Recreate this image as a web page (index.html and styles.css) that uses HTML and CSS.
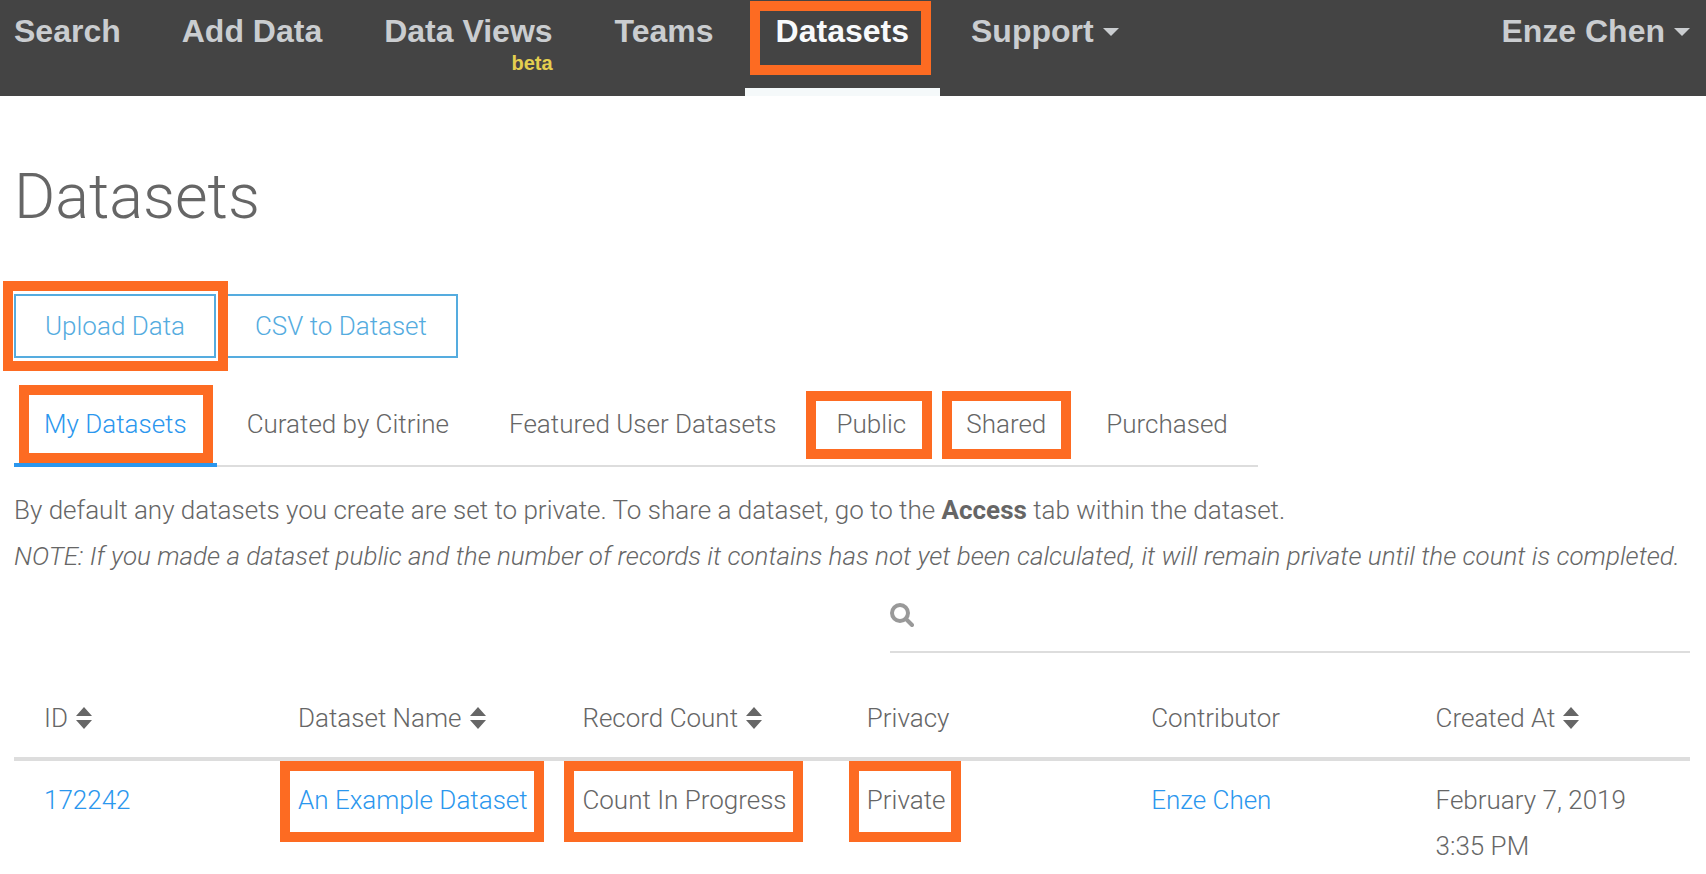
FILE: index.html
```html
<!DOCTYPE html>
<html lang="en">
<head>
<meta charset="utf-8">
<title>Datasets</title>
<link rel="stylesheet" href="styles.css">
</head>
<body>
<header class="topbar">
  <nav class="nav" aria-label="Main">
    <a class="nav-item" href="#">Search</a>
    <a class="nav-item" href="#">Add Data</a>
    <a class="nav-item" href="#">Data Views<span class="beta">beta</span></a>
    <a class="nav-item" href="#">Teams</a>
    <a class="nav-item active marked mark-nav" href="#">Datasets</a>
    <button class="nav-item" type="button">Support<span class="caret"></span></button>
    <button class="nav-item user" type="button">Enze Chen<span class="caret"></span></button>
  </nav>
</header>
<main class="page">
  <h1 class="title">Datasets</h1>
  <div class="actions">
    <button class="btn marked mark-btn" type="button">Upload Data</button>
    <button class="btn" type="button">CSV to Dataset</button>
  </div>
  <nav class="tabs" aria-label="Dataset groups">
    <a class="tab current marked mark-current" href="#">My Datasets</a>
    <a class="tab" href="#">Curated by Citrine</a>
    <a class="tab" href="#">Featured User Datasets</a>
    <a class="tab marked mark-public" href="#">Public</a>
    <a class="tab marked mark-shared" href="#">Shared</a>
    <a class="tab" href="#">Purchased</a>
  </nav>
  <p class="hint">By default any datasets you create are set to private. To share a dataset, go to the <strong>Access</strong> tab within the dataset.</p>
  <p class="note">NOTE: If you made a dataset public and the number of records it contains has not yet been calculated, it will remain private until the count is completed.</p>
  <label class="search">
    <svg class="search-icon" viewBox="0 0 24 26" aria-hidden="true"><circle cx="10" cy="11" r="8" fill="none" stroke="#999" stroke-width="4"/><path d="M16 17l6 6" stroke="#999" stroke-width="4" stroke-linecap="round"/></svg>
    <input class="search-input" type="search" aria-label="Search datasets">
  </label>
  <table class="grid">
    <colgroup><col class="c-id"><col><col><col><col><col></colgroup>
    <thead>
      <tr>
        <th><button class="sort" type="button">ID<svg class="sort-icon" viewBox="0 0 16 22" aria-hidden="true"><path d="M8 0l8 9H0zM8 22l8-9H0z"/></svg></button></th>
        <th><button class="sort" type="button">Dataset Name<svg class="sort-icon" viewBox="0 0 16 22" aria-hidden="true"><path d="M8 0l8 9H0zM8 22l8-9H0z"/></svg></button></th>
        <th><button class="sort" type="button">Record Count<svg class="sort-icon" viewBox="0 0 16 22" aria-hidden="true"><path d="M8 0l8 9H0zM8 22l8-9H0z"/></svg></button></th>
        <th>Privacy</th>
        <th>Contributor</th>
        <th><button class="sort" type="button">Created At<svg class="sort-icon" viewBox="0 0 16 22" aria-hidden="true"><path d="M8 0l8 9H0zM8 22l8-9H0z"/></svg></button></th>
      </tr>
    </thead>
    <tbody>
      <tr>
        <td><a class="link" href="#">172242</a></td>
        <td><a class="link marked mark-cell" href="#">An Example Dataset</a></td>
        <td><span class="marked mark-cell">Count In Progress</span></td>
        <td><span class="marked mark-cell">Private</span></td>
        <td><a class="link" href="#">Enze Chen</a></td>
        <td>February 7, 2019<br>3:35 PM</td>
      </tr>
    </tbody>
  </table>
</main>
</body>
</html>
```
FILE: styles.css
```css
* { box-sizing: border-box; }

body {
  margin: 0;
  background: #fff;
  color: #666;
  font: 300 26px/46px Roboto, "Liberation Sans", sans-serif;
}

a { text-decoration: none; }

button {
  border: 0;
  background: none;
  color: inherit;
  font: inherit;
  cursor: pointer;
}

/* Top bar */
.topbar {
  padding: 0 16px 0 14px;
  background: #444;
}

.nav { display: flex; }

.nav-item {
  display: flex;
  align-items: flex-start;
  position: relative;
  height: 96px;
  padding: 11px 31px 0;
  color: #cacdd0;
  font: 700 32px/40px "Liberation Sans", Arial, sans-serif;
  white-space: nowrap;
}

.nav-item:first-child { padding: 11px 30px 0 0; }
.nav-item.user { margin-left: auto; padding-right: 0; }

.nav-item.active {
  border-bottom: 8px solid #f5f9fa;
  color: #f8fafc;
}

.beta {
  position: absolute;
  top: 51px;
  right: 31px;
  color: #e5cf4f;
  font-size: 20px;
  line-height: 24px;
}

.caret {
  margin: 17px 0 0 9px;
  border: 8px solid transparent;
  border-top-color: currentColor;
  border-bottom: 0;
}

/* Page */
.page { padding: 65px 16px 0 14px; }

.title {
  margin: 0 0 61px;
  font-size: 63px;
  font-weight: 300;
  line-height: 72px;
}

.actions {
  display: flex;
  gap: 8px;
}

.btn {
  position: relative;
  height: 64px;
  padding: 0 29px;
  border: 2px solid #55acdf;
  color: #55acdf;
}

.tabs {
  display: flex;
  width: fit-content;
  margin-top: 13px;
  border-bottom: 2px solid #ddd;
}

.tab {
  position: relative;
  margin-bottom: -2px;
  padding: 30px 30px 16px;
  border-bottom: 4px solid transparent;
  color: #666;
  white-space: nowrap;
}

.tab.current {
  border-bottom-color: #2b97ee;
  color: #2b97ee;
}

.hint { margin: 20px 0 0; }
.hint strong { font-weight: 700; }

.note {
  margin: 0;
  font-style: italic;
  white-space: nowrap;
}

.search {
  display: flex;
  align-items: center;
  gap: 12px;
  width: calc(50% - 38px);
  height: 74px;
  margin-left: auto;
  border-bottom: 2px solid #ddd;
}

.search-icon {
  flex: none;
  width: 24px;
  height: 26px;
}

.search-input {
  flex: 1;
  min-width: 0;
  border: 0;
  outline: 0;
  background: none;
  color: inherit;
  font: inherit;
}

/* Table */
.grid {
  width: 100%;
  border-collapse: collapse;
  table-layout: fixed;
}

.c-id { width: 254px; }

.grid th {
  padding: 42px 0 16px 30px;
  border-bottom: 4px solid #ddd;
  font-weight: inherit;
  text-align: left;
}

.grid td {
  padding: 16px 0 0 30px;
  vertical-align: top;
  white-space: nowrap;
}

.sort {
  display: flex;
  align-items: center;
  gap: 8px;
  padding: 0;
}

.sort-icon {
  width: 16px;
  height: 22px;
  fill: #666;
}

.link { color: #2b97ee; }

/* Highlight frames */
.marked { position: relative; }

.marked::after {
  content: "";
  position: absolute;
  z-index: 1;
  border: 10px solid #fd6b22;
  pointer-events: none;
}

.mark-nav::after { inset: 1px 9px 13px 5px; }
.mark-btn::after { inset: -15px -14px -15px -13px; }
.mark-current::after { inset: 14px 4px 0 5px; }
.mark-public::after { inset: 20px 4px 4px 0; }
.mark-shared::after { inset: 20px 5px 4px 6px; }
.mark-cell::after { inset: -24px -16px -27px -18px; }
```
